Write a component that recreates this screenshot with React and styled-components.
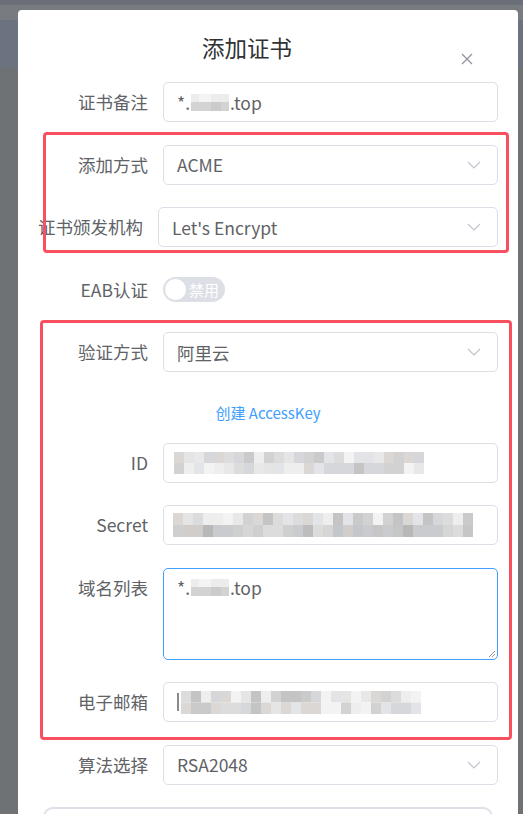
import React from 'react';
import styled, { createGlobalStyle } from 'styled-components';

const GlobalStyle = createGlobalStyle`
  html, body {
    margin: 0;
    overflow: hidden;
  }
  body {
    font-family: "Noto Sans CJK SC", "Noto Sans", sans-serif;
    background: #6f7275;
  }
`;

const Page = styled.div`
  height: 814px;
  overflow: hidden;
  padding: 10px 0 0 18px;
  box-sizing: border-box;
  background: linear-gradient(
    to bottom,
    #6b6f78 0,
    #6b6f78 5px,
    #787b7f 5px,
    #787b7f 20px,
    #6c7380 20px,
    #6c7380 68px,
    #6f7275 68px
  );
`;

const Modal = styled.div`
  position: relative;
  width: 500px;
  min-height: 860px;
  background: #fff;
  border-radius: 4px 4px 0 0;
`;

const Header = styled.div`
  padding: 22px 62px 0 20px;
`;

const Title = styled.h2`
  margin: 0;
  font-size: 22.5px;
  line-height: 30px;
  font-weight: 400;
  color: #303133;
  text-align: center;
`;

const CloseButton = styled.button`
  position: absolute;
  top: 41px;
  right: 43px;
  width: 16px;
  height: 16px;
  padding: 0;
  border: none;
  background: transparent;
  display: flex;
  align-items: center;
  justify-content: center;
`;

const Body = styled.div`
  padding: 20px 20px;
`;

const FormItem = styled.div`
  display: flex;
  align-items: flex-start;
  margin-bottom: 22.5px;
`;

const Label = styled.label`
  flex-shrink: 0;
  width: ${p => (p.$auto ? 'auto' : '125px')};
  padding-right: 15px;
  box-sizing: border-box;
  text-align: right;
  font-size: 17.5px;
  line-height: 40px;
  color: #606266;
  white-space: nowrap;
`;

const Control = styled.div`
  flex: 1;
  min-width: 0;
`;

const Field = styled.div`
  position: relative;
  display: flex;
  align-items: center;
  height: 40px;
  padding: 0 15px 0 13px;
  box-sizing: border-box;
  border: 1px solid #dcdfe6;
  border-radius: 5px;
  font-size: 17.5px;
  color: #606266;
  background: #fff;
`;

const FieldText = styled.span`
  flex: 1;
  display: flex;
  align-items: center;
  white-space: nowrap;
`;

const Chevron = styled.svg`
  flex-shrink: 0;
  margin-right: 1px;
`;

const TextArea = styled.div`
  position: relative;
  height: 92px;
  padding: 6px 15px 6px 13px;
  box-sizing: border-box;
  border: 1px solid #409eff;
  border-radius: 5px;
  font-size: 17.5px;
  line-height: 26px;
  color: #606266;
`;

const Grip = styled.svg`
  position: absolute;
  right: 1px;
  bottom: 1px;
`;

const Switch = styled.div`
  margin-top: 7.5px;
  display: inline-flex;
  align-items: center;
  width: 62px;
  height: 25px;
  padding: 2px;
  box-sizing: border-box;
  border-radius: 13px;
  background: #dcdfe6;
`;

const Knob = styled.span`
  width: 21px;
  height: 21px;
  border-radius: 50%;
  background: #fff;
`;

const SwitchText = styled.span`
  margin-left: 3px;
  font-size: 15px;
  line-height: 21px;
  color: #fff;
`;

const LinkRow = styled.div`
  height: 36px;
  margin-bottom: 12px;
  display: flex;
  align-items: center;
  justify-content: center;
`;

const Link = styled.a`
  font-size: 15px;
  color: #409eff;
  text-decoration: none;
`;

const BottomCard = styled.div`
  margin: 0 5px;
  height: 60px;
  border: 2px solid #dcdfe6;
  border-radius: 10px;
`;

const Highlight = styled.div`
  position: absolute;
  left: ${p => p.$left}px;
  top: ${p => p.$top}px;
  width: ${p => p.$width}px;
  height: ${p => p.$height}px;
  border: 3px solid #f9505f;
  border-radius: 4px;
  box-sizing: border-box;
  pointer-events: none;
`;

const Caret = styled.span`
  display: inline-block;
  width: 2px;
  height: 18px;
  margin-right: 2px;
  background: #8a8a8a;
`;

const grays = ['#e8e8e8', '#dcdcdc', '#d2d2d2', '#e2e4e7', '#d5d7db', '#cacaca', '#eeeeee', '#f3f3f3', '#c4c4c4', '#dad7d4', '#e5e5e5'];
const darkGrays = ['#cfcfcf', '#c6c6c6', '#bdbdbd', '#d6d6d6', '#c9cbcf', '#b8b8b8', '#d0cdca', '#dcdcdc', '#c3c6ca'];

function Mosaic({ cols, seed, cell = 10, rowH = 11, dark = false, shift = 0 }) {
  let s = seed;
  const rand = () => {
    s = (s * 9301 + 49297) % 233280;
    return s / 233280;
  };
  const rects = [];
  for (let r = 0; r < 2; r++) {
    for (let c = 0; c < cols; c++) {
      const pal = r === 1 && dark ? darkGrays : grays;
      const col = pal[Math.floor(rand() * pal.length)];
      rects.push(<rect key={`${r}-${c}`} x={c * cell} y={r * rowH} width={cell} height={rowH} fill={col} />);
    }
  }
  return (
    <svg width={cols * cell} height={rowH * 2} style={{ marginLeft: shift }}>
      {rects}
    </svg>
  );
}

function ChevronDown() {
  return (
    <Chevron width="14" height="8" viewBox="0 0 14 8">
      <path d="M1 1l6 6 6-6" fill="none" stroke="#c0c4cc" strokeWidth="1.2" />
    </Chevron>
  );
}

function Domain() {
  return (
    <FieldText>
      *.
      <svg width="38" height="17" style={{ margin: '0 1px' }}>
        <rect x="0" y="0" width="38" height="8" fill="#ececec" />
        <rect x="8" y="0" width="12" height="8" fill="#f4f4f4" />
        <rect x="0" y="8" width="38" height="9" fill="#d3d3d3" />
        <rect x="20" y="8" width="10" height="9" fill="#cbcbcb" />
      </svg>
      .top
    </FieldText>
  );
}

function Select({ value }) {
  return (
    <Field>
      <FieldText>{value}</FieldText>
      <ChevronDown />
    </Field>
  );
}

export default function App() {
  return (
    <>
      <GlobalStyle />
      <Page>
        <Modal>
          <Header>
            <Title>添加证书</Title>
          </Header>
          <CloseButton aria-label="close">
            <svg width="12" height="12" viewBox="0 0 12 12">
              <path d="M1 1l10 10M11 1L1 11" stroke="#909399" strokeWidth="1.3" />
            </svg>
          </CloseButton>
          <Body>
            <FormItem>
              <Label>证书备注</Label>
              <Control>
                <Field>
                  <Domain />
                </Field>
              </Control>
            </FormItem>
            <FormItem>
              <Label>添加方式</Label>
              <Control>
                <Select value="ACME" />
              </Control>
            </FormItem>
            <FormItem>
              <Label $auto>证书颁发机构</Label>
              <Control>
                <Select value="Let's Encrypt" />
              </Control>
            </FormItem>
            <FormItem>
              <Label>EAB认证</Label>
              <Control>
                <Switch>
                  <Knob />
                  <SwitchText>禁用</SwitchText>
                </Switch>
              </Control>
            </FormItem>
            <FormItem>
              <Label>验证方式</Label>
              <Control>
                <Select value="阿里云" />
              </Control>
            </FormItem>
            <LinkRow>
              <Link href="#">创建 AccessKey</Link>
            </LinkRow>
            <FormItem>
              <Label>ID</Label>
              <Control>
                <Field>
                  <FieldText>
                    <Mosaic cols={25} seed={17} shift={-3} />
                  </FieldText>
                </Field>
              </Control>
            </FormItem>
            <FormItem>
              <Label>Secret</Label>
              <Control>
                <Field>
                  <FieldText>
                    <Mosaic cols={30} seed={41} rowH={12} dark shift={-4} />
                  </FieldText>
                </Field>
              </Control>
            </FormItem>
            <FormItem>
              <Label>域名列表</Label>
              <Control>
                <TextArea>
                  <Domain />
                  <Grip width="8" height="8" viewBox="0 0 8 8">
                    <path d="M7 1L1 7M7 4L4 7" stroke="#909399" strokeWidth="1" />
                  </Grip>
                </TextArea>
              </Control>
            </FormItem>
            <FormItem>
              <Label>电子邮箱</Label>
              <Control>
                <Field>
                  <FieldText>
                    <Caret />
                    <Mosaic cols={24} seed={73} rowH={11.5} />
                  </FieldText>
                </Field>
              </Control>
            </FormItem>
            <FormItem>
              <Label>算法选择</Label>
              <Control>
                <Select value="RSA2048" />
              </Control>
            </FormItem>
            <BottomCard />
          </Body>
          <Highlight $left={25} $top={122} $width={466} $height={121} />
          <Highlight $left={22} $top={310} $width={472} $height={420} />
        </Modal>
      </Page>
    </>
  );
}
